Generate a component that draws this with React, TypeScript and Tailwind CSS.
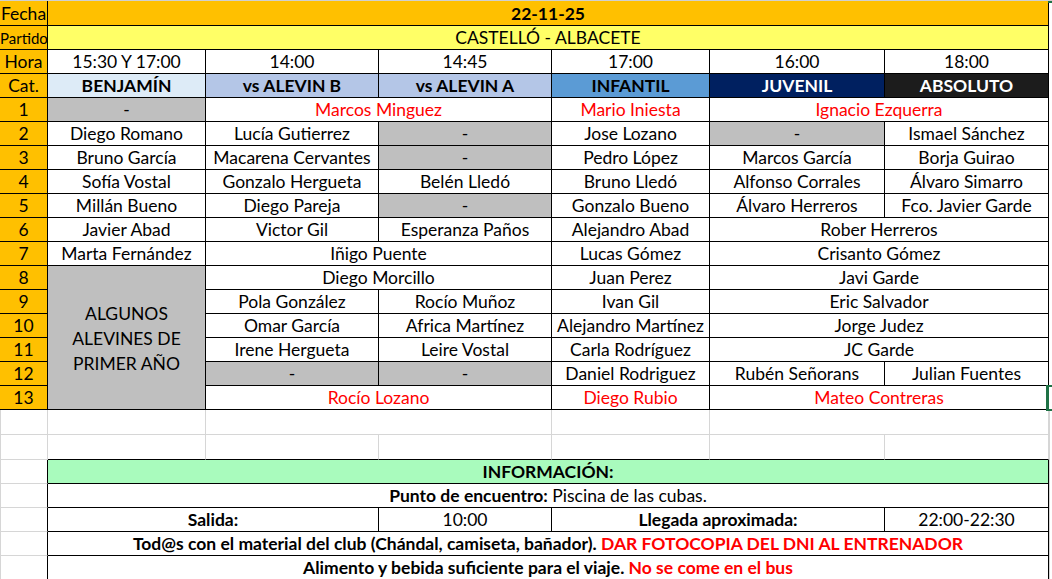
import React from "react";

const base =
  "flex items-end justify-center whitespace-nowrap overflow-hidden border-r border-b leading-[20px] pb-px";

type P = { children?: React.ReactNode; className?: string };

function C({ children, className = "" }: P) {
  return <div className={`${base} border-black ${className}`}>{children}</div>;
}
function G({ children, className = "" }: P) {
  return <div className={`${base} border-[#d6d6d6] ${className}`}>{children}</div>;
}

const red = "text-[#ff0000]";
const grey = "bg-[#bfbfbf]";
const num = "bg-[#ffc000]";

function Num({ n }: { n: string }) {
  return <C className={num}>{n}</C>;
}

export default function App() {
  return (
    <div
      className="relative w-[1052px] h-[579px] overflow-hidden bg-white text-black text-[17.5px] border-t border-[#d0d0d0]"
      style={{ fontFamily: "Lato, 'Open Sans', sans-serif" }}
    >
      <div className="grid grid-cols-[48px_158px_173px_173px_158px_175px_164px] grid-rows-[25px_repeat(16,24px)_25px_25px_repeat(5,24px)] w-[1049px]">
        {/* Fecha */}
        <C className={num}>Fecha</C>
        <C className="col-span-6 bg-[#ffc000] font-bold">22-11-25</C>
        {/* Partido */}
        <C className={`${num} text-[15px] justify-start`}>Partido</C>
        <C className="col-span-6 bg-[#ffff66]">CASTELLÓ - ALBACETE</C>
        {/* Hora */}
        <C className={num}>Hora</C>
        <C>15:30 Y 17:00</C>
        <C>14:00</C>
        <C>14:45</C>
        <C>17:00</C>
        <C>16:00</C>
        <C>18:00</C>
        {/* Cat */}
        <C className={num}>Cat.</C>
        <C className="bg-[#ddebf7] font-bold">BENJAMÍN</C>
        <C className="bg-[#b4c6e7] font-bold">vs ALEVIN B</C>
        <C className="bg-[#b4c6e7] font-bold">vs ALEVIN A</C>
        <C className="bg-[#5b9bd5] font-bold">INFANTIL</C>
        <C className="bg-[#002060] font-bold text-white">JUVENIL</C>
        <C className="bg-[#1c1c1c] font-bold text-white">ABSOLUTO</C>
        {/* 1 */}
        <Num n="1" />
        <C className={grey}>-</C>
        <C className={`col-span-2 ${red}`}>Marcos Minguez</C>
        <C className={red}>Mario Iniesta</C>
        <C className={`col-span-2 ${red}`}>Ignacio Ezquerra</C>
        {/* 2 */}
        <Num n="2" />
        <C>Diego Romano</C>
        <C>Lucía Gutierrez</C>
        <C className={grey}>-</C>
        <C>Jose Lozano</C>
        <C className={grey}>-</C>
        <C>Ismael Sánchez</C>
        {/* 3 */}
        <Num n="3" />
        <C>Bruno García</C>
        <C>Macarena Cervantes</C>
        <C className={grey}>-</C>
        <C>Pedro López</C>
        <C>Marcos García</C>
        <C>Borja Guirao</C>
        {/* 4 */}
        <Num n="4" />
        <C>Sofía Vostal</C>
        <C>Gonzalo Hergueta</C>
        <C>Belén Lledó</C>
        <C>Bruno Lledó</C>
        <C>Alfonso Corrales</C>
        <C>Álvaro Simarro</C>
        {/* 5 */}
        <Num n="5" />
        <C>Millán Bueno</C>
        <C>Diego Pareja</C>
        <C className={grey}>-</C>
        <C>Gonzalo Bueno</C>
        <C>Álvaro Herreros</C>
        <C>Fco. Javier Garde</C>
        {/* 6 */}
        <Num n="6" />
        <C>Javier Abad</C>
        <C>Victor Gil</C>
        <C>Esperanza Paños</C>
        <C>Alejandro Abad</C>
        <C className="col-span-2">Rober Herreros</C>
        {/* 7 */}
        <Num n="7" />
        <C>Marta Fernández</C>
        <C className="col-span-2">Iñigo Puente</C>
        <C>Lucas Gómez</C>
        <C className="col-span-2">Crisanto Gómez</C>
        {/* 8 */}
        <Num n="8" />
        <div className="row-span-6 flex flex-col items-center justify-center border-r border-b border-black bg-[#bfbfbf] leading-[25px] text-center pt-[2px]">
          <span>ALGUNOS</span>
          <span>ALEVINES DE</span>
          <span>PRIMER AÑO</span>
        </div>
        <C className="col-span-2">Diego Morcillo</C>
        <C>Juan Perez</C>
        <C className="col-span-2">Javi Garde</C>
        {/* 9 */}
        <Num n="9" />
        <C>Pola González</C>
        <C>Rocío Muñoz</C>
        <C>Ivan Gil</C>
        <C className="col-span-2">Eric Salvador</C>
        {/* 10 */}
        <Num n="10" />
        <C>Omar García</C>
        <C>Africa Martínez</C>
        <C>Alejandro Martínez</C>
        <C className="col-span-2">Jorge Judez</C>
        {/* 11 */}
        <Num n="11" />
        <C>Irene Hergueta</C>
        <C>Leire Vostal</C>
        <C>Carla Rodríguez</C>
        <C className="col-span-2">JC Garde</C>
        {/* 12 */}
        <Num n="12" />
        <C className={grey}>-</C>
        <C className={grey}>-</C>
        <C>Daniel Rodriguez</C>
        <C>Rubén Señorans</C>
        <C>Julian Fuentes</C>
        {/* 13 */}
        <Num n="13" />
        <C className={`col-span-2 ${red}`}>Rocío Lozano</C>
        <C className={red}>Diego Rubio</C>
        <C className={`col-span-2 ${red}`}>Mateo Contreras</C>
        {/* 14 empty */}
        <G className="border-l" />
        <G />
        <G className="col-span-2" />
        <G />
        <G className="col-span-2" />
        {/* 15 empty */}
        <G className="border-l" />
        <G className="border-b-black" />
        <G className="border-b-black" />
        <G className="border-b-black" />
        <G className="border-b-black" />
        <G className="border-b-black" />
        <G className="border-b-black" />
        {/* INFORMACION */}
        <G className="border-l border-r-black" />
        <C className="col-span-6 bg-[#a9fbbd] font-bold">INFORMACIÓN:</C>
        {/* Punto */}
        <G className="border-l border-r-black" />
        <C className="col-span-6">
          <span>
            <b>Punto de encuentro:</b> Piscina de las cubas.
          </span>
        </C>
        {/* Salida */}
        <G className="border-l border-r-black" />
        <C className="col-span-2 font-bold">Salida:</C>
        <C>10:00</C>
        <C className="col-span-2 font-bold">Llegada aproximada:</C>
        <C>22:00-22:30</C>
        {/* Todos */}
        <G className="border-l border-r-black" />
        <C className="col-span-6 font-bold">
          <span>
            Tod@s con el material del club (Chándal, camiseta, bañador).{" "}
            <span className={red}>DAR FOTOCOPIA DEL DNI AL ENTRENADOR</span>
          </span>
        </C>
        {/* Alimento */}
        <G className="border-l border-r-black" />
        <C className="col-span-6 font-bold">
          <span>
            Alimento y bebida suficiente para el viaje.{" "}
            <span className={red}>No se come en el bus</span>
          </span>
        </C>
      </div>
      {/* right gridline */}
      <div className="absolute left-[1049px] top-[410px] w-px h-[170px] bg-[#d6d6d6]" />
      {/* selection marker */}
      <div className="absolute left-[1046px] top-[384px] w-[6px] h-[26px] border-l-[3px] border-t-2 border-b-2 border-[#1e7145]" />
      <div className="absolute left-[1048px] top-[-1px] w-[4px] h-[3px] bg-[#1e7145]" />
    </div>
  );
}
